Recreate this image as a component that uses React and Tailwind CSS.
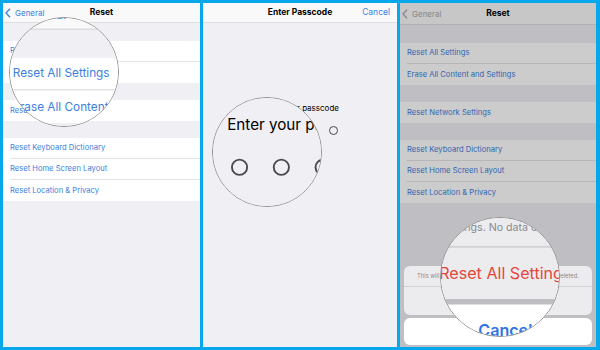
import React from 'react';

const groups = [
    ['Reset All Settings', 'Erase All Content and Settings'],
    ['Reset Network Settings'],
    ['Reset Keyboard Dictionary', 'Reset Home Screen Layout', 'Reset Location & Privacy'],
];

const Chevron = ({ className }) => (
    <svg width="6" height="10" viewBox="0 0 6 10" className={className}>
        <polyline points="5,0.8 1,5 5,9.2" fill="none" stroke="currentColor" strokeWidth="1.3" />
    </svg>
);

const SettingsScreen = ({ dimmed }) => (
    <div className="w-full h-full bg-[#efeff4] flex flex-col">
        {/* Nav bar */}
        <div className={`${dimmed ? 'h-[22px]' : 'h-[20px]'} shrink-0 bg-[#f9f9f9] border-b border-[#dedee2] grid grid-cols-[1fr_auto_1fr] items-center`}>
            <div className={`flex items-center gap-[4px] pl-[2px] ${dimmed ? 'text-[#a9a9ad]' : 'text-[#3d7fe0]'}`}>
                <Chevron />
                <span className="text-[8px]">General</span>
            </div>
            <span className="text-[8.5px] font-bold text-black">Reset</span>
            <span />
        </div>

        {/* Groups */}
        <div className="mt-[18px] flex flex-col gap-[17px]">
            {groups.map((rows, gi) => (
                <div key={gi} className="bg-white">
                    {rows.map((label, ri) => (
                        <div key={label} className="pl-[7px] h-[21px]">
                            <div className={`h-full flex items-center text-[7.6px] text-[#3d7fe0] ${ri < rows.length - 1 ? 'border-b border-[#e4e4e7]' : ''}`}>
                                {label}
                            </div>
                        </div>
                    ))}
                </div>
            ))}
        </div>
    </div>
);

const PasscodeScreen = () => (
    <div className="w-full h-full bg-[#efeff4] flex flex-col">
        <div className="h-[20px] shrink-0 bg-[#f9f9f9] border-b border-[#dedee2] grid grid-cols-[1fr_auto_1fr] items-center">
            <span />
            <span className="text-[8.5px] font-bold text-black">Enter Passcode</span>
            <span className="text-right pr-[7px] text-[8.5px] text-[#3d7fe0]">Cancel</span>
        </div>
        <div className="mt-[80px] text-center text-[8px] leading-[10px] text-black">Enter your passcode</div>
        <div className="mt-[13px] flex justify-center gap-[13px]">
            {[0, 1, 2, 3].map((i) => (
                <div key={i} className="w-[9px] h-[9px] rounded-full border border-[#4a4a4a]" />
            ))}
        </div>
    </div>
);

const SheetScreen = () => (
    <div className="relative w-full h-full">
        <SettingsScreen dimmed />
        {/* dim overlay */}
        <div className="absolute inset-0 bg-black/20" />
        {/* action sheet */}
        <div className="absolute left-[4px] right-[4px] bottom-[2px] flex flex-col gap-[3px]">
            <div className="rounded-[6px] bg-[#ececee] overflow-hidden">
                <div className="h-[21px] flex items-center justify-center text-[5.8px] text-[#8a8a8e] border-b border-[#d2d2d6]">
                    This will reset all settings. No data or media will be deleted.
                </div>
                <div className="h-[28px] flex items-center justify-center text-[8.8px] text-[#e5463c]">
                    Reset All Settings
                </div>
            </div>
            <div className="h-[27px] rounded-[6px] bg-white flex items-center justify-center text-[8.8px] font-semibold text-[#2f74e4]">
                Cancel
            </div>
        </div>
    </div>
);

export default function App() {
    return (
        <div className="w-[600px] h-[350px] bg-[#07a7ec] pl-[3px] pr-[4px] py-[3px] flex gap-[3px] font-['Inter','Liberation_Sans',sans-serif]">
            {/* Panel 1 */}
            <div className="relative w-[197px] h-full overflow-hidden">
                <SettingsScreen />
                <div className="absolute left-[6px] top-[14px] w-[110px] h-[110px] rounded-full overflow-hidden border border-[#909090] bg-white">
                    <div className="absolute left-[-8px] top-[-19px] w-[197px] h-[344px] origin-top-left scale-[1.55]">
                        <SettingsScreen />
                    </div>
                </div>
            </div>

            {/* Panel 2 */}
            <div className="relative w-[194px] h-full overflow-hidden">
                <PasscodeScreen />
                <div className="absolute left-[9px] top-[94px] w-[110px] h-[110px] rounded-full overflow-hidden border border-[#909090] bg-white">
                    <div className="absolute left-[-96px] top-[-173px] w-[194px] h-[344px] origin-top-left scale-[1.9]">
                        <PasscodeScreen />
                    </div>
                </div>
            </div>

            {/* Panel 3 */}
            <div className="relative w-[196px] h-full overflow-hidden">
                <SheetScreen />
                <div className="absolute left-[40px] top-[214px] w-[120px] h-[120px] rounded-full overflow-hidden border border-[#909090] bg-white">
                    <div className="absolute left-[-115px] top-[-490px] w-[196px] h-[344px] origin-top-left scale-[1.83]">
                        <SheetScreen />
                    </div>
                </div>
            </div>
        </div>
    );
}
